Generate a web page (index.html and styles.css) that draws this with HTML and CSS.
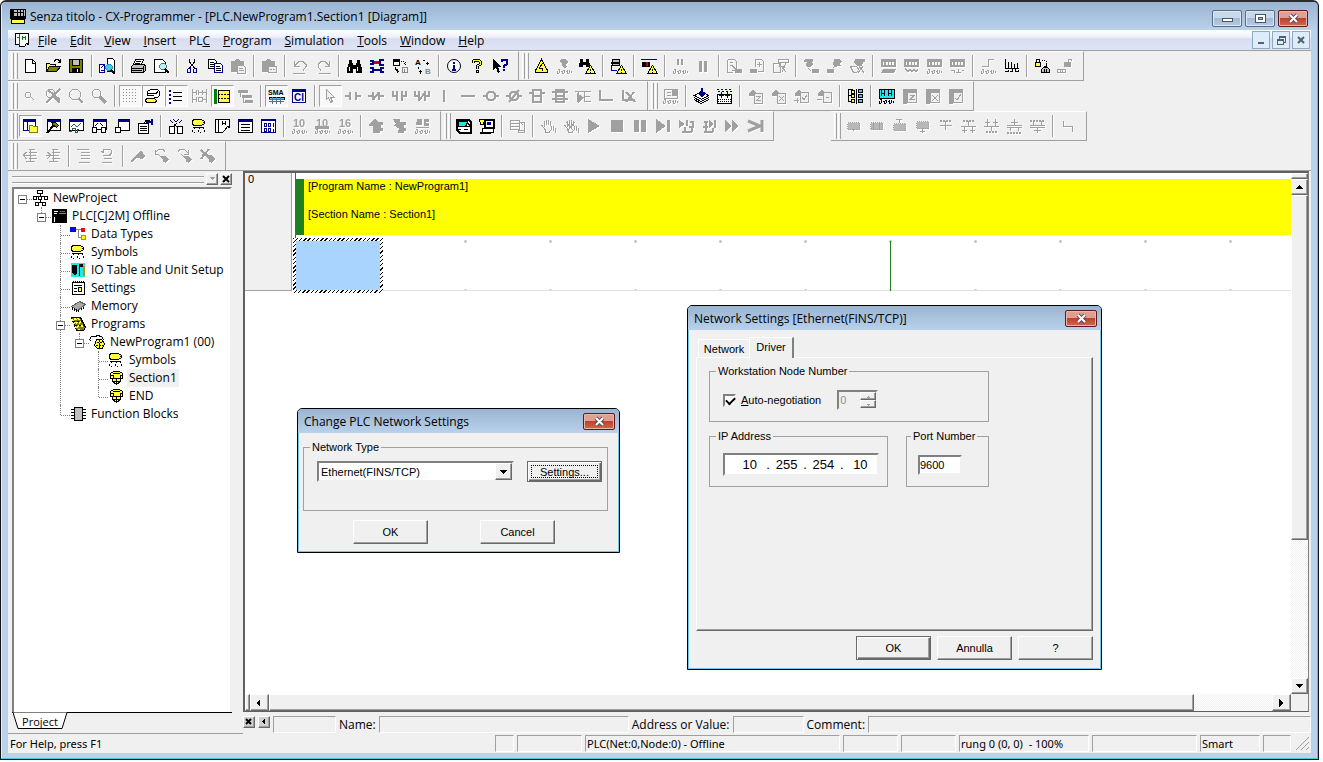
FILE: index.html
```html
<!DOCTYPE html>
<html lang="en">

<head>
  <meta charset="UTF-8">
  <meta name="viewport" content="width=device-width, initial-scale=1.0">
  <title>Senza titolo - CX-Programmer</title>
  <link rel="stylesheet" href="styles.css">
</head>

<body>
  <!-- shapes shared by several icons -->
  <svg class="defs">
    <defs>
      <path id="glasses" d="M1 15.5h2M1.5 15v-2M3.5 12v3M2 11.5h2M5 13.5h1v2h2M6.5 12.5h1M8.5 12v3M10 13.5h1v2h2M11 12.5h1M13.5 12v3M15.5 13v2" />
      <path id="magnifier" d="M3.5 1.5h4l2 2v4l-2 2h-4l-2-2v-4z" />
      <g id="warn"><path class="y" d="M11.5 7.5l5 8h-10z" /><path d="M11.5 11v2M11.5 14v1" /></g>
      <path id="plcbox" class="k" fill-rule="evenodd" d="M1 1h15v8H1zM3 4v3h1V4zM6 4v3h2V4zM9 4v3h2V4zM12 4v3h2V4z" />
      <g id="tag"><path class="y" d="M2.5 1.5h8l3 2v2l-3 2h-8l-1-2v-2z" /><path d="M12 4.5h1M2 9.5h11M1.5 14v-2M3 14.5h1M7.5 14v-2M9 14.5h1M13.5 14v-2M3.5 10v1M8.5 10v1M12.5 10v1" /></g>
      <g id="section"><path class="y" d="M2.5 3.5l3-2h6l3 2v5h-2v3l-4 3-4-3v-3h-2z" /><path d="M2 5.5h3v3h7v-3h2M5 3.5h7M8.5 8v6M5 11.5h7" /></g>
      <path id="book" d="M2 1h14v3H6v12H2z" />
      <path id="keys" d="M2 6l4-5 4 5v2H2z" />
    </defs>
  </svg>

  <div class="window">
    <header class="titlebar">
      <svg class="ic"><path class="g" d="M1.5 1.5h14v7h-14z" /><path class="k" d="M0 1h4v7H0zM0 8h16v3H0z" /><path d="M2 4.500h12M7.500 2v6M10.500 2v6M13.500 2v6" /><path class="y" d="M1.500 11.500h13v4h-13z" /></svg>
      <h1>Senza titolo - CX-Programmer - [PLC.NewProgram1.Section1 [Diagram]]</h1>
      <button class="cap" aria-label="Minimize"><svg><path class="w" d="M5.5 7.5h10v3h-10z" /></svg></button>
      <button class="cap" aria-label="Maximize"><svg><path class="w" fill-rule="evenodd" d="M5.5 3.5h10v8h-10zM8.5 6.5h4v2h-4z" /></svg></button>
      <button class="cap close" aria-label="Close"><svg class="smooth"><path class="xo" d="M7 4l7 7M14 4l-7 7" /><path class="xi" d="M7 4l7 7M14 4l-7 7" /></svg></button>
    </header>

    <nav class="menubar">
      <svg class="ic"><path class="w" d="M1.5 1.5h13v11l-2-1-2 3h-5v-2h-4z" /><path d="M5.5 2v11M3 5.5h2M8.5 4v4M11.5 4v4M9 5.5h2" stroke="#008000" /></svg>
      <button><u>F</u>ile</button>
      <button><u>E</u>dit</button>
      <button><u>V</u>iew</button>
      <button><u>I</u>nsert</button>
      <button>PL<u>C</u></button>
      <button><u>P</u>rogram</button>
      <button><u>S</u>imulation</button>
      <button><u>T</u>ools</button>
      <button><u>W</u>indow</button>
      <button><u>H</u>elp</button>
      <span class="mdi">
        <button aria-label="Minimize diagram"><svg><path d="M5 11h6" stroke-width="2" /></svg></button>
        <button aria-label="Restore diagram"><svg><path d="M4.5 7.5h6v5h-6zM4 8.5h7M6.5 7v-3h6v6h-2M7 5.5h5" /></svg></button>
        <button aria-label="Close diagram"><svg class="smooth"><path d="M5 5l6 6M11 5l-6 6" stroke-width="2" /></svg></button>
      </span>
    </nav>

    <div class="toolrow">
      <div class="band">
        <button aria-label="New"><svg><path class="w" d="M3.5 1.5h7l3 3v10h-10z" /><path d="M10.5 2v3h3" /></svg></button>
        <button aria-label="Open"><svg><path class="y" d="M1.5 13.5v-8h3l1 1h5v3" /><path class="o" d="M1.5 13.5l3-5h11l-4 5z" /><path d="M9 3.5l2-2h2l2 2M15.5 1v4M13 4.5h2" /></svg></button>
        <button aria-label="Save"><svg><path class="o" d="M1.5 1.5h13v13h-13z" /><path class="g" d="M4.5 1.5h7v6h-7z" /><path class="k" d="M4 10h8v5H4z" /><path d="M9.5 11v3" stroke="#fff" /></svg></button>
        <i></i>
        <button aria-label="Compare"><svg><path class="w b" d="M.5 6.5h5v8h-5z" /><path class="w" d="M8.5 .5h5l2 2v11h-7z" /><path class="b" d="M2 9.5l3-2M2 12.5h3" /><path class="c" d="M8.500 6.500h3l2 2v2l-2 2h-3l-2-2v-2z" stroke="#2090c0" /><path d="M12 12l4 4" stroke-width="2" /></svg></button>
        <i></i>
        <button aria-label="Print"><svg><path class="w" d="M5.5 1.5h8l-2 5h-8z" /><path class="g" d="M1.5 8.5l2-2h11l1 2v4l-2 2h-12z" /><path d="M6 3.5h5M5 5.5h5M2 10.5h12M2 12.5h10M13.5 8v6" /></svg></button>
        <button aria-label="Print preview"><svg><path class="w" d="M1.5 1.5h8l3 3v10h-11z" /><path fill="#c0f0f0" stroke="#408080" d="M8.5 5.5h3l2 2v2l-2 2h-3l-2-2v-2z" /><path d="M12 11l4 4" stroke-width="2" /></svg></button>
        <i></i>
        <button aria-label="Cut"><svg><path d="M5.5 1v3l5 6M10.5 1v3l-5 6" /><path class="b" d="M4.5 10.5h2v4h-3v-3zM10.5 10.5h2v4h-3v-3z" /></svg></button>
        <button aria-label="Copy"><svg><path class="w" d="M1.5 1.5h6l2 2v7h-8z" /><path class="w b" d="M7.5 5.5h6l2 2v7h-8z" /><path d="M3 4.5h4M3 6.5h4M3 8.5h4M9 8.5h4M9 10.5h5M9 12.5h5" /></svg></button>
        <button aria-label="Paste" disabled><svg><path class="k" d="M1 3h4l1-2h3l1 2h4v4H7v7H1z" /><path class="w" d="M7.5 7.5h6l2 2v6h-8z" /><path d="M9 10.5h4M9 12.5h5" /></svg></button>
        <i></i>
        <button aria-label="Paste special" disabled><svg><path class="k" d="M1 3h4l1-2h3l1 2h4v5H7v6H1z" /><path class="w" d="M7.5 8.5h8v6h-8z" /><path d="M9 11.5h2M12 11.5h2" /></svg></button>
        <i></i>
        <button aria-label="Undo" disabled><svg><path d="M2.5 3v5h5M3 7.5l4-4h4l3 3v2l-3 4M1 15.5h12" /></svg></button>
        <button aria-label="Redo" disabled><svg><path d="M14.5 3v5h-5M14 7.5l-4-4h-4l-3 3v2l3 4M4 15.5h12" /></svg></button>
        <i></i>
        <button aria-label="Find"><svg><path class="k" d="M3 2h3v3h1v2h3V5h1V2h3v3l2 5v5h-6v-4H7v4H1v-5l2-5z" /><path d="M3.5 9v4M11.5 9v4" stroke="#fff" /></svg></button>
        <button aria-label="Replace"><svg class="smooth"><path d="M5 4.500h6" stroke="#c00030" stroke-width="3" /><path class="b" d="M1 3h3v3H1M15 2h-4v5h4" stroke-width="2" /><path class="b" d="M1 10h3v4H1M15 10h-3v4h3M4 12h8" stroke-width="2" /></svg></button>
        <button aria-label="Replace next"><svg><path class="k" d="M1 1h7v3H1z" /><path d="M1.5 4v3h6v-3M3.5 9v2l3 3M5.5 11v4" /><path d="M9 3.5h3v3M13.5 4v3" stroke-dasharray="1 1" /><path d="M10.5 9.5h5v5h-5zM12 11v3" stroke="#888" /></svg></button>
        <button aria-label="Change all"><svg><text x="0" y="7">A</text><text x="10" y="16" class="gt">B</text><path d="M8 2.5h2M12.5 4v3M11 5.5h3M3.5 9v2M5.5 12v4M4 13.5h3" /></svg></button>
        <i></i>
        <button aria-label="Information"><svg class="smooth"><circle class="w" cx="8" cy="8" r="6.5" /><path class="b" d="M8 4v2M8 7v5M6 12h4" stroke-width="2" /></svg></button>
        <button aria-label="Help"><svg><path d="M4.5 5v-2l2-1h3l2 2v2l-3 2v3" stroke-width="3" /><path d="M4.5 5v-2l2-1h3l2 2v2l-3 2v3" stroke="#ff0" /><path class="y" d="M7.5 12.5h2v2h-2z" /></svg></button>
        <button aria-label="Context help"><svg><path class="k" d="M1 1l8 8H6l2 5-2 1-2-5-3 2z" /><path class="b" d="M10 4v-2h5v4l-3 2v2M12 11v2" stroke-width="2" /></svg></button>
      </div>
      <div class="band">
        <button aria-label="Work online"><svg><path class="y" d="M8.5 1.5l6 11v2h-12v-2z" /><path d="M9.5 5l-3 5h3v3" /></svg></button>
        <button aria-label="Monitor" disabled><svg><path class="k" d="M5 1h5l2 3-2 2 1 3-3 1-3-3 2-1-3-2z" /><use href="#glasses" /></svg></button>
        <button aria-label="Find online"><svg><path class="k" d="M1 1h3v3h3V1h3l1 8H7V7H4v2H0z" /><use href="#warn" /></svg></button>
        <i></i>
        <button aria-label="Auto online"><svg><path class="g" d="M2.5 1.5h7v6h-7z" /><path d="M1 4.5h9" stroke-width="2" /><path class="b" d="M1.5 7v5h5" /><use href="#warn" /></svg></button>
        <i></i>
        <button aria-label="Simulator online"><svg><path class="b" d="M0 1.5h16" /><path class="k" d="M1 4h8v5H1z" /><path d="M6 4v4" stroke="#c00030" stroke-width="2" /><use href="#warn" /></svg></button>
        <i></i>
        <button aria-label="Pause monitor" disabled><svg><path d="M6 1v6M10 1v6" stroke-width="2" /><use href="#glasses" /></svg></button>
        <button aria-label="Pause" disabled><svg><path class="k" d="M4 3h3v11H4zM9 3h3v11H9z" /></svg></button>
        <i></i>
        <button aria-label="Transfer to PLC" disabled><svg><path d="M1.5 1.5h7l2 2v6M1.5 2v12h5M4 4.5h3M4 7.5h2l4 4M10 8v4H6" /><path class="k" d="M9 11h7v4H9z" /></svg></button>
        <button aria-label="Transfer from PLC" disabled><svg><path d="M6.5 9v-7.5h6l2 2v10h-6M10.5 9v-5M8 6.5h5" /><path class="k" d="M1 11h7v4H1z" /></svg></button>
        <button aria-label="Compare with PLC" disabled><svg><path d="M1.5 5.5h7v9h-7zM6 1.5h10v3h-10zM7.5 4v4h4M9 8l5 6M14 5l-4 9" /></svg></button>
        <i></i>
        <button aria-label="Transfer all to PLC" disabled><svg><path class="k" d="M2 1h8v3H8l2 2-2 3H4l-1-3 1-2H1zM9 11h7v4H9z" /><path d="M5 10l3 3" /></svg></button>
        <button aria-label="Transfer all from PLC" disabled><svg><path class="k" d="M8 1h5l3 3-2 1 1 3h-4l-1 2-3-3zM1 11h7v4H1z" /><path d="M7 10l3-3" /></svg></button>
        <button aria-label="Compare all" disabled><svg><path class="k" d="M6 1h10v3h-2l-1 4H8L5 5z" /><path d="M1.5 8.5h6l3 4-3 2h-3zM10 8l5 7M14 8l-5 7" /></svg></button>
        <i></i>
        <button aria-label="Program mode" disabled><svg><use href="#plcbox" /><path class="k" d="M3 11h13l-2 4H1z" /></svg></button>
        <button aria-label="Debug mode" disabled><svg><use href="#plcbox" /><path d="M2 10l3 4 2-3 2 3 2-3 2 3 2-3" /></svg></button>
        <button aria-label="Monitor mode" disabled><svg><use href="#plcbox" /><use href="#glasses" /></svg></button>
        <button aria-label="Run mode" disabled><svg><use href="#plcbox" /><path d="M2 12.5h3v2M7 14.5h5M9.5 11v4M13 12.5h2" /></svg></button>
        <i></i>
        <button aria-label="Differential monitor" disabled><svg><path d="M2 8.5h6v-7h6" /><use href="#glasses" /></svg></button>
        <button aria-label="Data trace"><svg><path d="M2.5 1v9h13M5.5 4v6M8.5 4v6M11.5 6v4M14.5 5v5M2 13.5h3v-2M7 13.5h2v-3h3v3h3v-2" /></svg></button>
        <i></i>
        <button aria-label="Set password"><svg><path class="y" d="M1.5 4.5h5v4h-5z" /><path d="M2.5 4v-3h3v3M12.500 5v4M10 8.500h3" /><path d="M8 2.500h4M12.500 3v2" stroke-dasharray="1 1" /><path class="g" d="M7.5 11.5l2-2h4l2 2v3h-8z" /><path d="M10.5 11v3M12.5 11v3" /></svg></button>
        <button aria-label="Release password" disabled><svg><path class="k" d="M7 4h7v5H7z" /><path d="M11.5 4v-3h3v2M.5 11.5h8v3h-8zM3.5 11v3M5.5 11v3" /></svg></button>
      </div>
    </div>

    <div class="toolrow">
      <div class="band">
        <button aria-label="Zoom fit" disabled><svg><path d="M4.5 4.5h3l1 1v3l-1 1h-3l-1-1v-3zM9 9l3 3" /></svg></button>
        <button aria-label="Zoom region" disabled><svg><use href="#magnifier" /><path d="M1 15L15 1M9 9l6 6M3 2l12 10" stroke-width="2" /></svg></button>
        <button aria-label="Zoom in" disabled><svg><path d="M4.5 1.5h5l3 3v4l-3 3h-5l-3-3v-4z" /><path d="M11 11l4 4" stroke-width="2" /></svg></button>
        <button aria-label="Zoom out" disabled><svg><use href="#magnifier" /><path d="M9 9l6 6" stroke-width="3" /></svg></button>
        <i></i>
        <button class="on" aria-label="Grid"><svg><path d="M1 1.5h15M1 4.5h15M1 7.5h15M1 10.5h15M1 13.5h15" stroke="#909090" stroke-dasharray="1 2" /></svg></button>
        <button class="on" aria-label="Comments"><svg><path class="w" d="M2.5 3.5l3-2h7l2 2v4l-2 2h-3v2M3 5.5h8l2-2M2 4v3h7" /><path class="y" d="M1.5 10.5h8l2 2-1 2h-9l-1-2z" /></svg></button>
        <button class="on" aria-label="Rung annotation"><svg><path class="b" d="M1 2.5h2M1 6.5h2M1 10.5h2M1 14.5h2" stroke-width="2" /><path d="M5 4.5h9M5 8.5h9M5 12.5h9" /></svg></button>
        <button aria-label="Monitor in rung" disabled><svg><path d="M1.5 1v14M15.5 1v14M2 4.5h3M5.5 2v5M7.5 2v5M8 4.5h3M11.5 2v5M2 11.5h3M5.5 9v5M7.5 9.5h4v4h-4zM12 11.5h3M12 4.5h3" /></svg></button>
        <button class="on" aria-label="Rung wrapping"><svg><path d="M1.5 1v15" stroke="#008000" stroke-width="3" /><path class="y" d="M4.5 2.5h11v12h-11z" /><path d="M4 6.5h12M4 10.5h12" stroke-dasharray="2 1" /></svg></button>
        <button aria-label="Cascade" disabled><svg><path class="k" d="M1 2h10v3H1zM5 7h10v3H5zM8 12h8v3H8z" /><path d="M3.5 5v4M6.5 9v5h2" /></svg></button>
        <i></i>
        <button class="on" aria-label="Show as mnemonics"><svg><text x="0" y="7" class="tiny">SMA</text><path class="c" d="M1 9h15v2H1z" /><path d="M1 11.5h15M1 13.5h15M4.5 9v7M8.5 9v7M12.5 9v7" stroke="#507090" /></svg></button>
        <button aria-label="Show instructions"><svg><path class="w b" d="M1.5 1.5h13v13h-13z" /><path class="b" d="M1 2.500h14" stroke-width="3" /><text x="3" y="13" class="nt">CI</text></svg></button>
        <i></i>
        <button class="on" aria-label="Selection mode" disabled><svg><path class="w" d="M4.5 1.5l8 8h-4l2 4-2 1-2-5-2 2z" /></svg></button>
        <button aria-label="Contact" disabled><svg><path d="M0 8h6M5 4v8M11 4v8M11 8h5" stroke-width="2" /></svg></button>
        <button aria-label="Closed contact" disabled><svg><path d="M0 8h5M5 4v8M11 4v8M11 8h5M5 12l6-8" stroke-width="2" /></svg></button>
        <button aria-label="Contact OR" disabled><svg><path d="M2 3v5h4M6 3v10M11 3v10M11 8h4V3" stroke-width="2" /></svg></button>
        <button aria-label="Closed contact OR" disabled><svg><path d="M1 3v5h4M5 3v10M11 3v10M11 8h4V3M5 12l6-7" stroke-width="2" /></svg></button>
        <button aria-label="Vertical" disabled><svg><path d="M7 2v12" stroke-width="2" /></svg></button>
        <button aria-label="Horizontal" disabled><svg><path d="M1 8h14" stroke-width="2" /></svg></button>
        <button aria-label="Coil" disabled><svg class="smooth"><path d="M0 8h4M12 8h4M6 4h4l2 2v4l-2 2H6l-2-2V6z" stroke-width="2" /></svg></button>
        <button aria-label="Closed coil" disabled><svg class="smooth"><path d="M0 8h4M12 8h4M6 4h4l2 2v4l-2 2H6l-2-2V6zM3 14L13 2" stroke-width="2" /></svg></button>
        <button aria-label="Instruction" disabled><svg><path d="M4 2h8v12H4zM4 8h8M0 5h4M12 5h4" stroke-width="2" /></svg></button>
        <button aria-label="Function block" disabled><svg><path d="M4 2h8v12H4zM4 8h8M0 4h16M0 11h16" stroke-width="2" /></svg></button>
        <button aria-label="Parameter" disabled><svg><path d="M0 3.5h16M9.5 4v10M10 8.5h5M10 13.5h6M3.5 4v10l5-5" /><path class="k" d="M2 5l6 4-6 5z" /></svg></button>
        <button aria-label="Line connect" disabled><svg><path d="M2 2v10h13" stroke-width="2" /></svg></button>
        <button aria-label="Line delete" disabled><svg><path d="M2 2v10h12M5 4l9 10M13 4l-8 10" stroke-width="2" /></svg></button>
      </div>
      <div class="band">
        <button aria-label="Window monitor" disabled><svg><path d="M2.5 1.5h13v9h-13zM5 4.5h4M5 7.5h4" /><path class="k" d="M10 2h5v6h-5z" /><use href="#glasses" /></svg></button>
        <i></i>
        <button aria-label="Compile program"><svg><path class="w" d="M1.5 7.5l7-4 7 4-7 4z" /><path d="M1 9.5l7 4 8-4M1 11.5l7 4 8-4" /><path class="b" d="M8.5 0v6M6 5l3 3 3-3" stroke-width="2" /></svg></button>
        <button aria-label="Compile all"><svg><path d="M1 1.5h15M2 3.5h14" class="b" stroke-dasharray="2 2" /><path class="w" d="M1.5 6.5h14v9h-14z" /><path class="b" d="M5.5 4v6M3 7.5h5M11.5 4v6M9 7.5h5" /><path d="M2 11.5h13M2 13.5h13" stroke-dasharray="1 1" /></svg></button>
        <i></i>
        <button aria-label="Edit online" disabled><svg><use href="#keys" class="k" /><path class="w" d="M7.5 5.5h8v10h-8z" /><path d="M9 8.5h4l-3 4h4" /></svg></button>
        <button aria-label="Cancel online edit" disabled><svg><use href="#keys" class="k" /><path class="w" d="M7.5 5.5h8v10h-8z" /><path d="M9 8l5 5M14 8l-5 5" /></svg></button>
        <button aria-label="Send changes" disabled><svg><use href="#keys" class="k" /><path class="w" d="M7.5 4.5h8v10h-8z" /><path d="M9 9l2 3 3-5M1 12.5h5M4 10v5" /></svg></button>
        <button aria-label="Release access" disabled><svg><use href="#keys" class="k" /><path class="w" d="M7.5 4.5h8v10h-8z" /><path d="M10 9.5h3M1 11.5h5" /></svg></button>
        <i></i>
        <button aria-label="Address reference"><svg><path d="M1 1.5h5M1.5 2v12M2 7.5h2M2 13.5h2" /><path class="y" d="M4.5 2.5h3v3h-3zM4.5 6.5h3v3h-3zM4.5 11.5h3v3h-3z" /><path class="c" d="M11.5 1.5h4v3h-4zM11.5 6.5h4v3h-4zM11.5 11.5h4v3h-4z" /><path d="M9.5 1v15" /></svg></button>
        <i></i>
        <button aria-label="Watch"><svg><path class="c2" d="M1 1h15v9H1z" /><path d="M3.5 2v6M6.5 2v6M4 5.5h2M10.5 2v6M13.5 2v6M11 5.5h2" /><use href="#glasses" /></svg></button>
        <button aria-label="Output edit" disabled><svg><use href="#book" class="k" /><path class="w" d="M6.5 4.5h9v10h-9z" /><path d="M9 7.5h4l-4 4h5" /></svg></button>
        <button aria-label="Output cancel" disabled><svg><use href="#book" class="k" /><path class="w" d="M6.5 4.5h9v10h-9z" /><path d="M8 7l6 6M14 7l-6 6" /></svg></button>
        <button aria-label="Output accept" disabled><svg><use href="#book" class="k" /><path class="w" d="M6.5 4.5h9v10h-9z" /><path d="M8 10l2 2 4-6" /></svg></button>
      </div>
    </div>

    <div class="toolrow">
      <div class="band">
        <button class="on" aria-label="Project workspace"><svg><path class="w b" d="M1.5 1.5h12v11h-12z" /><path class="b" d="M1 2.500h13M5.5 3v9" /><path class="b" d="M1 2.500h13" stroke-width="3" /><path class="y" d="M7.5 7.5h3l1 1h4v6h-8z" stroke="#808000" /></svg></button>
        <button aria-label="Output window"><svg><path class="w" d="M2.5 1.5h13v11h-13z" /><path class="b" d="M2 2.5h14" stroke-width="2" /><path class="o" d="M6.5 4.5h4l3 3-2 2-3-2z" /><path d="M9 7l-7 8" stroke-width="2" /></svg></button>
        <button aria-label="Watch window"><svg><path class="w" d="M1.5 1.5h14v11h-14z" /><path class="b" d="M1 2.5h15" stroke-width="2" /><path d="M3 9l3-3 3 3 4-4M1 13.5h2l2-3h2v4h2v-3h2" stroke="#206060" /></svg></button>
        <button aria-label="Address tool"><svg><path class="w" d="M2.5 1.5h13v10h-13z" /><path class="b" d="M2 2.5h14" stroke-width="2" /><path class="w" d="M1.5 9.5h4v5h-4zM10.5 9.5h4v5h-4z" /><path d="M4 8l3-3M12 8l-3-3" /></svg></button>
        <button aria-label="Output tool"><svg><path class="w" d="M4.5 1.5h11v11h-11z" /><path class="b" d="M4 2.5h12" stroke-width="2" /><path class="w" d="M1.5 9.5h5v5h-5z" /></svg></button>
        <button aria-label="Properties"><svg><path class="w" d="M1.5 5.5h10v10h-10z" /><path d="M3 8.5h7M3 10.5h7M3 12.5h7M7 6l2-4h4" /><path class="b" d="M9 3.5h5M15 1v6" stroke-width="2" /></svg></button>
        <i></i>
        <button aria-label="Cross reference"><svg><path class="w" d="M1.5 8.5h5v7h-5zM9.5 8.5h5v7h-5z" /><path d="M2 2l3 3M6 6l4 4M14 2l-3 3M9 5l-4 4" /><path class="b" d="M5 1l3 3M11 1l-3 3" /></svg></button>
        <button aria-label="Local symbols"><svg><use href="#tag" /></svg></button>
        <button aria-label="View diagram"><svg><path class="w" d="M1.5 1.5h14v8l-2-1-3 4-2 2h-7z" /><path d="M4.5 1v14M8.5 3v4M11.5 3v4M9 5.5h2" /></svg></button>
        <button aria-label="View mnemonics"><svg><path class="w" d="M1.5 1.5h14v13h-14z" /><path class="b" d="M1 2.5h15" stroke-width="2" /><path d="M4 6.5h9M4 9.5h9M4 12.5h9" /></svg></button>
        <button aria-label="View addresses"><svg><path class="w b" d="M1.5 1.5h14v13h-14z" /><path class="b" d="M1 2.5h15M4.5 5.5h2v3h-2zM8.5 5.5h2v3h-2zM13 5v4M4.5 10.5h2v3h-2zM8.5 10.5h2v3h-2zM12.5 11h1v3" /></svg></button>
        <i></i>
        <button aria-label="Decimal" disabled><svg><text x="2" y="9" class="num">10</text><use href="#glasses" /></svg></button>
        <button aria-label="Signed decimal" disabled><svg><text x="2" y="9" class="num">10</text><path d="M1 9.5h14" stroke-width="3" /><use href="#glasses" /></svg></button>
        <button aria-label="Hex" disabled><svg><text x="2" y="9" class="num">16</text><use href="#glasses" /></svg></button>
        <i></i>
        <button aria-label="Force on" disabled><svg><path class="k" d="M1 6l6-5 3 3h5v3h-2v3h2v3h-3v2H5V8H1z" /></svg></button>
        <button aria-label="Force off" disabled><svg><path class="k" d="M2 1h7v3h6v3h-2v3h2v3h-2v2H7v-3l2-1-7-4 3-1z" /></svg></button>
        <button aria-label="Force cancel" disabled><svg><path class="k" d="M3 1h5v6H2zM10 1h5v3h-3v1h3v3h-5z" /><path d="M2 9.5h13" /><use href="#glasses" /></svg></button>
      </div>
      <div class="band">
        <button aria-label="Work online simulator"><svg><path class="w" d="M1.500 1.500h12l2 2v11h-11l-3-3z" stroke-width="2" /><path class="c2" d="M3.5 3.500h9v5h-9z" /><path d="M3 11.500h3M9 11.500h4" /><path class="y" d="M12.5 4.5l3 4h-5z" /></svg></button>
        <button aria-label="Simulator settings"><svg><path class="w" d="M6.5 1.5h9v8h-9z" stroke-width="2" /><path class="y" d="M1.5 1.5h5l-1 5h-3z" /><path class="w" d="M4.500 10.500h11v4h-11z" /><path d="M2 15h11" stroke-width="2" /><path class="b" d="M9 5.500h4" stroke-width="3" /></svg></button>
        <i></i>
        <button aria-label="Task control" disabled><svg><path d="M1.5 2.5h9v3h-9zM1.5 5.5h9v3h-9zM1.5 8.5h9v3h-9zM11 4.5h4v7M9 12.5h6v2h-6zM12 5l2 2" /></svg></button>
        <i></i>
        <button aria-label="Break point" disabled><svg><path d="M4.5 9v-6M6.5 7v-5M8.5 7v-5M10.5 8v-5M1.5 7l4 5v2h4l2-3v-3M13.5 8v5M15.5 10v5" /></svg></button>
        <button aria-label="Clear break points" disabled><svg><path d="M4.5 9v-6M6.5 7v-5M8.5 7v-5M10.5 8v-5M1.5 7l4 5v2h4l2-3v-3M13.5 8v5M15.5 10v5M3 4l8 9M12 4l-8 9" /></svg></button>
        <button aria-label="Run" disabled><svg><path class="k" d="M2 1l12 7-12 7z" /></svg></button>
        <button aria-label="Stop" disabled><svg><path class="k" d="M2 2h12v12H2z" /></svg></button>
        <button aria-label="Pause simulator" disabled><svg><path class="k" d="M2 2h5v12H2zM9 2h5v12H9z" /></svg></button>
        <button aria-label="Step run" disabled><svg><path class="k" d="M1 1l10 7-10 7zM12 2h3v12h-3z" /></svg></button>
        <button aria-label="Step in" disabled><svg><path class="k" d="M1 2l6 4-6 4zM8 2h2v6H8z" /><path d="M12 3.5h3M11 8.5h4v-6M4 13.5h10M6.5 9v5M13.5 9v5" stroke-width="2" /></svg></button>
        <button aria-label="Step out" disabled><svg><path class="k" d="M8 2l5 4-5 4zM13 2h2v8h-2z" /><path d="M3 3.5h4M2 8.5h5M3 13.5h9M4.5 4v10M11.5 10v4" stroke-width="2" /></svg></button>
        <button aria-label="Continuous step" disabled><svg><path class="k" d="M1 2l7 6-7 6zM8 2l7 6-7 6z" /></svg></button>
        <button aria-label="Scan run" disabled><svg class="smooth"><path d="M1 3l12 5-12 5M15 2v12" stroke-width="3" /></svg></button>
      </div>
      <div class="band gap">
        <button aria-label="Step" disabled><svg><path class="h" d="M2.5 4.5h12v7h-12z" /><path d="M8.5 11v2" /></svg></button>
        <button aria-label="Initial step" disabled><svg><path class="h" d="M2.5 4.5h12v7h-12z" /><path d="M5.5 5v6M11.5 5v6" /></svg></button>
        <button aria-label="Step up" disabled><svg><path class="h" d="M2.5 5.5h12v7h-12z" /><path d="M5 1.5h6M8.5 1v4" /></svg></button>
        <button aria-label="Step down" disabled><svg><path class="h" d="M2.5 3.5h12v7h-12z" /><path d="M8.5 10v5M6 13.5h5" /></svg></button>
        <button aria-label="Transition" disabled><svg><path d="M3 2.5h12" stroke-width="2" stroke-dasharray="2 1" /><path d="M8.5 3v9M3 7.5h12" /></svg></button>
        <button aria-label="Divergence" disabled><svg><path d="M3 2.5h12" stroke-width="2" stroke-dasharray="2 1" /><path d="M8.5 3v5M1 8.5h15M4.5 9v6M12.5 9v6M2 12.5h5M10 12.5h5" /></svg></button>
        <button aria-label="Convergence" disabled><svg><path d="M4.5 1v7M12.5 1v7M2 4.5h5M10 4.5h5M1 8.5h15M8.5 9v4" /><path d="M3 13.5h12" stroke-width="2" stroke-dasharray="2 1" /></svg></button>
        <button aria-label="Parallel divergence" disabled><svg><path d="M8.5 1v6M5 4.5h7M1 7.5h15M1 9.5h15M4.5 10v3M12.5 10v3" /><path d="M1 14.5h15" stroke-width="2" stroke-dasharray="2 1" /></svg></button>
        <button aria-label="Parallel convergence" disabled><svg><path d="M1 2.5h15" stroke-width="2" stroke-dasharray="2 1" /><path d="M4.5 3v4M12.5 3v4M1 7.5h15M1 9.5h15M8.5 10v5M5 12.5h7" /></svg></button>
        <i></i>
        <button aria-label="Jump" disabled><svg><path d="M3.5 3v5h9v6" /></svg></button>
      </div>
    </div>

    <div class="toolrow last">
      <div class="band">
        <button aria-label="Outdent" disabled><svg><path d="M7 1.5h6M7 4.5h8M1 7.5h13M7 10.5h8M4 13.5h9M4.5 4l-3 3 3 4M8.5 1v13" /></svg></button>
        <button aria-label="Indent" disabled><svg><path d="M7 1.5h6M7 4.5h8M1 7.5h13M7 10.5h8M4 13.5h9M2.5 4l3 3-3 4M8.5 1v13" /></svg></button>
        <i></i>
        <button aria-label="Comment block" disabled><svg><path d="M1 1.5h12M5 4.5h9M5 7.5h9M5 10.5h9M3 14.5h11" /></svg></button>
        <button aria-label="Uncomment block" disabled><svg><path d="M4 7.5h8M5 10.5h8M3 14.5h10M4.5 5v-4h7l1 2v2l-2 2M2 3l3 2" /></svg></button>
        <i></i>
        <button aria-label="Bookmark" disabled><svg><path class="k" d="M8 6l3-4 4 6-3 3-5-1z" /><path d="M1 14L9 6" stroke-width="2" /></svg></button>
        <button aria-label="Previous bookmark" disabled><svg><path d="M2 2v4h4M2 5l4-4h4l2 3M5 6l9 8" /><path class="k" d="M9 8h3l4 3-3 4-3-1z" /></svg></button>
        <button aria-label="Next bookmark" disabled><svg><path d="M12 2v4h-4M12 5l-4-4h-4l-2 3M5 6l9 8" /><path class="k" d="M9 8h3l4 3-3 4-3-1z" /></svg></button>
        <button aria-label="Clear bookmarks" disabled><svg><path d="M2 2l12 12M10 1l-8 10M3 7h6" stroke-width="2" /><path class="k" d="M9 7h3l4 4-3 4-3-1z" /></svg></button>
      </div>
    </div>

    <main class="workspace">
      <aside class="side">
        <div class="grip">
          <span></span>
          <button class="raised" aria-label="Panel menu" disabled><svg><path class="k" d="M2 3h6L5 6z" /></svg></button>
          <button class="raised" aria-label="Close panel"><svg class="smooth"><path d="M2 2l6 6M8 2l-6 6" stroke-width="2" /></svg></button>
        </div>
        <ul class="tree">
          <li>
            <div class="node"><button class="toggle" aria-label="Collapse"></button><svg class="ic"><path d="M8.5 3v9M3 6.5h10M5 12.5h6M3.500 6v2M13.500 6v2" /><path class="w" d="M5.5 .5h5v3h-5zM1.5 6.5h3v3h-3zM6.5 6.5h3v3h-3zM12.5 6.5h3v3h-3zM3.5 12.5h3v3h-3zM10.5 12.5h3v3h-3z" /></svg><span>NewProject</span></div>
            <ul>
              <li class="end">
                <div class="node"><button class="toggle" aria-label="Collapse"></button><svg class="ic"><path class="k" d="M1 1h15v14H1z" /><path d="M3 3.5h4M3 5.5h3M3.5 9v5" stroke="#fff" /><path d="M9 3.5h5" stroke="#e03030" /><path d="M8 5.5h7" stroke="#888" /></svg><span>PLC[CJ2M] Offline</span></div>
                <ul>
                  <li><div class="node"><svg class="ic"><path d="M5 3.5h9M8.5 4v7M8 11.5h4" stroke="#888" /><path fill="#00f" stroke="none" d="M0 1h6v5H0z" /><path fill="#f00" stroke="none" d="M11 2h4v4h-4z" /><path fill="#ff0" stroke="#a0a000" d="M11.5 9.5h4v4h-4z" /></svg><span>Data Types</span></div></li>
                  <li><div class="node"><svg class="ic"><use href="#tag" /></svg><span>Symbols</span></div></li>
                  <li><div class="node"><svg class="ic"><path class="c2" d="M1 1h14v14H1z" stroke="none" /><path class="k" d="M2 3h5v8l-2 3-3-3zM9 2h4v3h-3v9H9z" /><path d="M13.5 4v10" stroke="#a0a000" stroke-width="2" /></svg><span>IO Table and Unit Setup</span></div></li>
                  <li><div class="node"><svg class="ic"><path class="w" d="M2.5 2.5h12v12h-12z" /><path d="M3 1.5h11" stroke-dasharray="1 1" /><path d="M4 5.5h8M4 8.5h3M4 11.5h3" /><path class="y" d="M8.5 7.5h3v4h-3z" /></svg><span>Settings</span></div></li>
                  <li><div class="node"><svg class="ic"><path fill="#a8a8a8" d="M1.5 8.5l8-5 6 3-8 6z" stroke="#606060" /><path d="M2 9v3M4 10v3M6 11v3M8 12v2M11 10v2M13 9v2" /></svg><span>Memory</span></div></li>
                  <li>
                    <div class="node"><button class="toggle" aria-label="Collapse"></button><svg class="ic"><path class="o" d="M1.5 1.5h9l5 10-2 3h-7z" /><path d="M2 3l4 9M5 2l4 12M8 2l5 11" stroke="#ff4" stroke-dasharray="2 2" stroke-width="2" /><path d="M3 5h9M5 9h9" stroke-dasharray="2 2" /></svg><span>Programs</span></div>
                    <ul>
                      <li class="end">
                        <div class="node"><button class="toggle" aria-label="Collapse"></button><svg class="ic"><path class="w" d="M2.5 7.5l-2-2 2-3h4l2-1 4 1 2 3-2 3" /><path class="y" d="M7.5 5.5h5l3 4-2 5h-5l-3-3z" /><path d="M8 8.5h5M7 11.5h7M10.5 6v9" stroke-dasharray="2 1" /></svg><span>NewProgram1 (00)</span></div>
                        <ul>
                          <li><div class="node"><svg class="ic"><use href="#tag" /></svg><span>Symbols</span></div></li>
                          <li><div class="node"><svg class="ic"><use href="#section" /></svg><span class="selected">Section1</span></div></li>
                          <li class="end"><div class="node"><svg class="ic"><use href="#section" /></svg><span>END</span></div></li>
                        </ul>
                      </li>
                    </ul>
                  </li>
                  <li class="end"><div class="node"><svg class="ic"><path class="g" d="M4.5 1.5h8v13h-8z" /><path d="M1 3.5h3M1 6.5h3M1 9.5h3M1 12.5h3M13 3.5h3M13 6.5h3M13 9.5h3M13 12.5h3" /></svg><span>Function Blocks</span></div></li>
                </ul>
              </li>
            </ul>
          </li>
        </ul>
        <div class="sidetabs">
          <button><svg class="smooth"><path class="w" d="M0 .5l5 16h44l5-16" /></svg><span>Project</span></button>
        </div>
      </aside>

      <section class="center">
        <div class="editor">
          <div class="view">
            <div class="rung">
              <div class="gutter">0</div>
              <div class="ladder">
                <div class="comments">
                  <p>[Program Name : NewProgram1]</p>
                  <p>[Section Name : Section1]</p>
                </div>
                <div class="cells">
                  <div class="cursor"></div>
                  <div class="busbar"></div>
                </div>
              </div>
            </div>
          </div>
          <div class="vscroll">
            <span class="raised split"></span>
            <button class="raised" aria-label="Scroll up"><svg><path class="k" d="M3 9h8L7 5z" /></svg></button>
            <span class="raised thumb"></span>
            <span class="track"></span>
            <button class="raised" aria-label="Scroll down"><svg><path class="k" d="M3 5h8L7 9z" /></svg></button>
          </div>
          <div class="hscroll">
            <span class="raised split"></span>
            <button class="raised" aria-label="Scroll left"><svg><path class="k" d="M9 3v8L5 7z" /></svg></button>
            <span class="raised thumb"></span>
            <span class="track"></span>
            <button class="raised" aria-label="Scroll right"><svg><path class="k" d="M6 3v8l4-4z" /></svg></button>
          </div>
          <span class="corner"></span>
        </div>
        <div class="infobar">
          <button class="raised" aria-label="Close bar"><svg class="smooth"><path d="M2 2l5 5M7 2l-5 5" stroke-width="2" /></svg></button>
          <button class="raised" aria-label="Collapse bar"><svg><path class="k" d="M6 1v7L3 5z" /></svg></button>
          <output class="w-id"></output>
          <label for="opName">Name:</label>
          <output id="opName" class="w-name"></output>
          <label for="opValue">Address or Value:</label>
          <output id="opValue" class="w-value"></output>
          <label for="opComment">Comment:</label>
          <output id="opComment" class="w-comment"></output>
        </div>
      </section>
    </main>

    <footer class="statusbar">
      <span class="help">For Help, press F1</span>
      <span class="pane p-s"></span>
      <span class="pane p-m"></span>
      <span class="pane p-plc">PLC(Net:0,Node:0) - Offline</span>
      <span class="pane p-n"></span>
      <span class="pane p-n"></span>
      <span class="pane p-rung">rung 0 (0, 0)&nbsp; - 100%</span>
      <span class="pane p-l"></span>
      <span class="pane p-smart">Smart</span>
      <span class="pane p-e"></span>
      <svg class="sizer smooth"><path d="M2 15L15 2M7 15l8-8M12 15l3-3" /></svg>
    </footer>

    <form class="dialog change" action="#">
      <header>
        <h2>Change PLC Network Settings</h2>
        <button type="button" class="cap close" aria-label="Close"><svg class="smooth"><path class="xo" d="M12 4l7 7M19 4l-7 7" /><path class="xi" d="M12 4l7 7M19 4l-7 7" /></svg></button>
      </header>
      <div class="dlgbody">
        <fieldset>
          <legend>Network Type</legend>
          <div class="line">
            <div class="combo">
              <select aria-label="Network Type">
                <option>Ethernet(FINS/TCP)</option>
              </select>
              <span class="raised"><svg><path class="k" d="M3 6h8L7 10z" /></svg></span>
            </div>
            <button type="button" class="btn default focused">Settings...</button>
          </div>
        </fieldset>
        <div class="actions">
          <button type="button" class="btn">OK</button>
          <button type="button" class="btn">Cancel</button>
        </div>
      </div>
    </form>

    <form class="dialog network" action="#">
      <header>
        <h2>Network Settings [Ethernet(FINS/TCP)]</h2>
        <button type="button" class="cap close" aria-label="Close"><svg class="smooth"><path class="xo" d="M12 4l7 7M19 4l-7 7" /><path class="xi" d="M12 4l7 7M19 4l-7 7" /></svg></button>
      </header>
      <div class="dlgbody">
        <div class="tabs">
          <button type="button">Network</button>
          <button type="button" class="active">Driver</button>
        </div>
        <div class="tabpanel">
          <fieldset class="wide">
            <legend>Workstation Node Number</legend>
            <div class="line">
              <input type="checkbox" id="auto" checked>
              <label for="auto"><u>A</u>uto-negotiation</label>
              <span class="spin">
                <input type="text" aria-label="Node number" value="0" disabled>
                <span class="arrows">
                  <button type="button" class="raised" aria-label="Up" disabled><svg><path class="k" d="M5 5h4L7 3z" /></svg></button>
                  <button type="button" class="raised" aria-label="Down" disabled><svg><path class="k" d="M5 3h4L7 5z" /></svg></button>
                </span>
              </span>
            </div>
          </fieldset>
          <div class="pair">
            <fieldset class="ipset">
              <legend>IP Address</legend>
              <div class="ip">
                <input type="text" aria-label="Octet 1" value="10"><span>.</span>
                <input type="text" aria-label="Octet 2" value="255"><span>.</span>
                <input type="text" aria-label="Octet 3" value="254"><span>.</span>
                <input type="text" aria-label="Octet 4" value="10">
              </div>
            </fieldset>
            <fieldset class="portset">
              <legend>Port Number</legend>
              <input type="text" class="port" aria-label="Port Number" value="9600">
            </fieldset>
          </div>
        </div>
        <div class="actions">
          <button type="button" class="btn default">OK</button>
          <button type="button" class="btn">Annulla</button>
          <button type="button" class="btn">?</button>
        </div>
      </div>
    </form>
  </div>
</body>

</html>
```
FILE: styles.css
```css
* {
  box-sizing: border-box;
}

body {
  display: flex;
  height: 100vh;
  margin: 0;
  padding: 0 4px 2px 0;
  background-color: white;
  color: black;
  font-family: "Open Sans", "Noto Sans", sans-serif;
  font-size: 12px;
}

button, input, select {
  margin: 0;
  padding: 0;
  border: 0;
  border-radius: 0;
  background: none;
  color: inherit;
  font: inherit;
}

svg {
  display: block;
  width: 17px;
  height: 17px;
  fill: none;
  stroke: currentColor;
  shape-rendering: crispEdges;
}

.smooth {
  shape-rendering: auto;
}

.defs {
  position: absolute;
  width: 0;
  height: 0;
}

/* icon colours */
.k { fill: currentColor; stroke: none; }
.w { fill: white; }
.y { fill: #ffff40; }
.o { fill: #808000; }
.g { fill: #c0c0c0; }
.c { fill: #40c8f0; }
.c2 { fill: #20e8e8; }
.b { stroke: #000090; }
.h { fill: #b8b8b8; stroke-dasharray: 1 1; }

svg text {
  fill: currentColor;
  stroke: none;
  font: bold 8px "Liberation Sans", Arial, sans-serif;
}

svg .tiny { font-size: 7px; }
svg .gt { fill: #888; }
svg .nt { fill: #000090; font-size: 10px; }
svg .num { font-size: 11px; }

.window {
  position: relative;
  display: flex;
  flex-direction: column;
  flex: 1;
  min-width: 0;
  padding: 0 7px 6px 7px;
  border: 1px solid #101418;
  border-top: 2px solid #2c2c30;
  border-radius: 6px 6px 0 0;
  background-color: #b9d1ea;
  box-shadow: inset -1px -1px 0 #48c8d8, inset 1px 0 0 #e4eef8;
}

/* title bar */
.titlebar {
  display: flex;
  align-items: center;
  gap: 3px;
  height: 28px;
  margin: 0 -6px;
  padding: 0 9px 0 8px;
  border-radius: 4px 4px 0 0;
  background: linear-gradient(#9ab4d2, #b9d1ea);
}

h1, h2 {
  margin: 0;
  font-size: 12px;
  font-weight: normal;
  white-space: nowrap;
}

.titlebar h1 {
  flex: 1;
}

.titlebar .cap {
  margin-top: 4px;
}

.cap {
  width: 30px;
  height: 17px;
  border: 1px solid #5a6b82;
  border-radius: 2px;
  background: linear-gradient(#c8d8ea 45%, #a4bad4 50%, #b8cce4);
  box-shadow: inset 0 0 0 1px #dce8f4;
  color: #4a5568;
}

.cap svg {
  width: 100%;
  height: 100%;
  margin-left: 4px;
}

.cap.close {
  border-color: #5c1a1a;
  background: linear-gradient(#e0a090 45%, #c04030 50%, #d06850);
  box-shadow: inset 0 0 0 1px #e8b8a8;
}

.xo { stroke: #5a4a58; stroke-width: 4; }
.xi { stroke: white; stroke-width: 2; }

/* menu bar */
.menubar {
  display: flex;
  align-items: center;
  height: 21px;
  padding-left: 6px;
  border-bottom: 1px solid #a0a0a0;
  background: linear-gradient(#ffffff, #eef1fa 35%, #d8def0 45%, #dfe4f4);
}

.menubar > button {
  padding: 0 6px 0 7px;
}

.mdi {
  display: flex;
  gap: 2px;
  margin-left: auto;
  margin-right: 1px;
}

.mdi button {
  width: 18px;
  height: 18px;
  border: 1px solid #90a8c0;
  background-color: #dcecfa;
  color: #506070;
}

/* toolbars */
.toolrow {
  display: flex;
  height: 30px;
  background-color: #f0f0f0;
}

.band {
  position: relative;
  display: flex;
  align-items: center;
  padding: 0 6px 0 11px;
  border-top: 1px solid white;
  border-right: 1px solid #a0a0a0;
  border-bottom: 1px solid #a0a0a0;
}

.band::before {
  content: "";
  position: absolute;
  top: 1px;
  bottom: 1px;
  left: 3px;
  width: 7px;
  background: linear-gradient(90deg, #fff 1px, transparent 1px 2px, #a0a0a0 2px 3px, transparent 3px 4px, #fff 4px 5px, transparent 5px 6px, #a0a0a0 6px);
}

.band.gap {
  margin-left: 57px;
}

.toolrow.last {
  border-bottom: 1px solid #a0a0a0;
}

.toolrow.last .band {
  border-bottom: 0;
}

.band button {
  width: 23px;
  height: 22px;
  padding: 0 3px;
}

.band button:disabled {
  color: #a0a0a0;
}

.band button:disabled svg {
  filter: drop-shadow(1px 1px 0 white);
}

.band button:disabled .w {
  fill: #f0f0f0;
}

.band button.on {
  border: 1px solid #a0a0a0;
  border-right-color: white;
  border-bottom-color: white;
  padding: 0 2px;
  background-color: #f8f8f8;
}

.band i {
  width: 2px;
  height: 22px;
  margin: 0 3px;
  border-left: 1px solid #a0a0a0;
  border-right: 1px solid white;
}

/* workspace */
.workspace {
  display: flex;
  flex: 1;
  min-height: 0;
  background-color: #f0f0f0;
}

.raised {
  border: 1px solid;
  border-color: #fff #696969 #696969 #fff;
  background-color: #f0f0f0;
  box-shadow: inset -1px -1px 0 #a0a0a0;
}

.raised:disabled {
  color: #a0a0a0;
}

.side {
  display: flex;
  flex-direction: column;
  width: 235px;
  padding: 2px 11px 3px 4px;
  border-bottom: 1px solid #a0a0a0;
}

.grip {
  display: flex;
  gap: 2px;
  height: 12px;
  margin-bottom: 2px;
}

.grip span {
  flex: 1;
  height: 7px;
  margin-top: 3px;
  border: 1px solid #a0a0a0;
  border-width: 1px 0;
  box-shadow: 0 1px 0 white, inset 0 1px 0 white;
}

.grip button {
  width: 12px;
  height: 12px;
}

.grip svg {
  width: 10px;
  height: 10px;
}

.tree, .tree ul {
  margin: 0;
  padding: 0;
  list-style: none;
}

.tree {
  flex: 1;
  border: 2px solid;
  border-color: #808080 #f0f0f0 transparent #808080;
  border-bottom: 0;
  background-color: white;
}

.tree ul {
  margin-left: 19px;
}

.tree li {
  position: relative;
}

.tree ul > li::before {
  content: "";
  position: absolute;
  top: 0;
  bottom: 0;
  left: 8px;
  border-left: 1px dotted #808080;
}

.tree ul > li.end::before {
  bottom: auto;
  height: 10px;
}

.node {
  position: relative;
  display: flex;
  align-items: center;
  height: 18px;
  padding-left: 18px;
}

.node::before {
  content: "";
  position: absolute;
  top: 10px;
  left: 9px;
  width: 9px;
  border-top: 1px dotted #808080;
}

.node span {
  margin-left: 2px;
  padding: 0 2px;
  line-height: 18px;
  white-space: nowrap;
}

.node .selected {
  background-color: #f0f0f0;
}

.toggle {
  position: absolute;
  top: 6px;
  left: 4px;
  width: 9px;
  height: 9px;
  border: 1px solid #808080;
  background: linear-gradient(#000, #000) center / 5px 1px no-repeat white;
}

.sidetabs {
  height: 18px;
  padding-left: 1px;
  border-top: 1px solid black;
}

.sidetabs button {
  position: relative;
  top: -1px;
  width: 54px;
  height: 18px;
  font-size: 11px;
}

.sidetabs svg {
  position: absolute;
  top: 0;
  left: 0;
  width: 55px;
}

.sidetabs span {
  position: relative;
}

.center {
  display: flex;
  flex-direction: column;
  flex: 1;
  min-width: 0;
}

.editor {
  display: grid;
  grid-template-columns: 1fr 17px;
  grid-template-rows: 1fr 17px;
  flex: 1;
  min-height: 0;
  margin-right: 2px;
  border: 1px solid;
  border-color: #606060 #808080 #606060 #606060;
  border-top-width: 2px;
  border-left-width: 2px;
}

.view {
  min-width: 0;
  overflow: hidden;
  background-color: white;
}

.rung {
  display: flex;
  font: 11px "Liberation Sans", Arial, sans-serif;
}

.gutter {
  width: 47px;
  padding: 0 3px;
  border-right: 1px solid #a0a0a0;
  border-bottom: 1px solid #a0a0a0;
  background-color: #f0f0f0;
}

.ladder {
  flex: 1;
  min-width: 0;
  margin-left: 3px;
  padding-top: 6px;
  background: linear-gradient(#208020, #208020) 0 0 / 1px 65px no-repeat;
}

.comments {
  height: 56px;
  padding-left: 4px;
  border-left: 9px solid #208020;
  background-color: yellow;
}

.comments p {
  margin: 0;
  height: 28px;
  line-height: 15px;
}

/* one mark at each corner where ladder cells meet */
.cells {
  position: relative;
  height: 56px;
  border-bottom: 1px solid #e0e0e0;
  background: radial-gradient(circle, #c8c8c8 1px, transparent 2px) 43px 31px / 85px 49px;
}

.cursor {
  position: absolute;
  top: 3px;
  left: -2px;
  width: 90px;
  height: 55px;
  border: 3px solid transparent;
  background:
    linear-gradient(#a9d4fe, #a9d4fe) padding-box,
    repeating-linear-gradient(135deg, #000 0 1px, #fff 1px 3px) border-box;
}

.busbar {
  position: absolute;
  top: 6px;
  left: 595px;
  width: 1px;
  height: 50px;
  background-color: #208020;
}

.vscroll, .hscroll {
  display: flex;
  background: repeating-conic-gradient(#fff 0 25%, #f0f0f0 0 50%) 0 0 / 2px 2px;
}

.vscroll {
  flex-direction: column;
}

.vscroll .split { height: 6px; }
.vscroll button { height: 16px; }
.vscroll .thumb { flex: 345; }
.vscroll .track { flex: 139; }

.vscroll svg, .hscroll svg {
  width: 14px;
  height: 14px;
}

.hscroll .split { width: 5px; }
.hscroll button { width: 19px; }
.hscroll .thumb { flex: 928; }
.hscroll .track { flex: 78; }

.corner {
  background-color: #f0f0f0;
}

.infobar {
  display: flex;
  align-items: center;
  gap: 3px;
  height: 22px;
  padding-top: 2px;
}

.infobar button {
  width: 12px;
  height: 12px;
  margin-bottom: 4px;
  background-color: #d0d0d0;
}

.infobar svg {
  width: 10px;
  height: 10px;
}

.infobar output, .pane {
  border: 1px solid;
  border-color: #a0a0a0 white white #a0a0a0;
}

.infobar output {
  height: 17px;
}

.infobar label {
  white-space: nowrap;
}

.w-id { width: 63px; }
.w-name { width: 250px; }
.w-value { width: 71px; }
.w-comment { flex: 1; }

.statusbar {
  display: flex;
  align-items: center;
  gap: 3px;
  height: 19px;
  padding-left: 2px;
  background-color: #f0f0f0;
  font-family: "Noto Sans", "Open Sans", sans-serif;
  font-size: 11px;
  white-space: nowrap;
}

.help {
  flex: 1;
}

.pane {
  height: 17px;
  padding-left: 1px;
  line-height: 15px;
}

.p-s { width: 19px; }
.p-m { width: 65px; }
.p-plc { width: 255px; }
.p-n { width: 55px; }
.p-rung { width: 130px; }
.p-l { width: 105px; }
.p-smart { width: 60px; }
.p-e { width: 28px; }

.sizer {
  color: #a0a0a0;
}

/* dialogs */
.dialog {
  position: absolute;
  border: 1px solid black;
  border-radius: 5px 5px 0 0;
  background-color: #f0f0f0;
  box-shadow: inset 0 0 0 1px #70c8e0;
  font: 11px "Liberation Sans", Arial, sans-serif;
}

.change {
  top: 406px;
  left: 296px;
  width: 323px;
}

.network {
  top: 303px;
  left: 686px;
  width: 415px;
}

.dialog header {
  display: flex;
  align-items: center;
  justify-content: space-between;
  height: 24px;
  padding: 0 4px 0 6px;
  border-radius: 4px 4px 0 0;
  background: linear-gradient(#9ab4d2, #b9d1ea);
  font-family: "Open Sans", "Noto Sans", sans-serif;
}

.dialog .cap {
  width: 32px;
}

.dialog .cap svg {
  margin-left: 0;
}

fieldset {
  min-width: 0;
  margin: 0;
  padding: 7px 5px 0 13px;
  border: 1px solid #a0a0a0;
}

legend {
  margin-left: -7px;
  padding: 0 2px;
  line-height: 14px;
}

.line {
  display: flex;
  align-items: center;
}

.btn {
  width: 75px;
  height: 24px;
  border: 1px solid;
  border-color: white #696969 #696969 white;
  background-color: #f0f0f0;
  box-shadow: inset -1px -1px 0 #a0a0a0;
}

.btn.default {
  border-color: #696969;
  box-shadow: inset 1px 1px 0 white, inset -1px -1px 0 #696969, inset -2px -2px 0 #a0a0a0;
}

.btn.focused {
  height: 21px;
  outline: 1px dotted black;
  outline-offset: -5px;
}

.change .dlgbody {
  padding: 7px 11px 8px 5px;
}

.change fieldset {
  padding-bottom: 28px;
}

.change .line {
  justify-content: space-between;
}

.change .actions {
  display: flex;
  gap: 52px;
  padding: 9px 0 0 50px;
}

.combo {
  position: relative;
  width: 197px;
}

.combo select, .ip, .port, .spin {
  border: 2px solid;
  border-color: #808080 #f0f0f0 #f0f0f0 #808080;
}

.combo select {
  width: 100%;
  height: 21px;
  padding-left: 2px;
  background-color: white;
  appearance: none;
}

.combo span {
  position: absolute;
  top: 2px;
  right: 2px;
  width: 17px;
  height: 17px;
  pointer-events: none;
}

.network .dlgbody {
  padding: 7px 8px 9px;
}

.tabs {
  display: flex;
  align-items: flex-end;
  padding-left: 2px;
}

.tabs button {
  width: 51px;
  height: 18px;
  border: 1px solid white;
  border-width: 1px 0 0 1px;
}

.tabs .active {
  position: relative;
  width: 45px;
  height: 21px;
  margin-bottom: -1px;
  padding-bottom: 2px;
  border-right: 2px solid #808080;
  background-color: #f0f0f0;
}

.tabpanel {
  height: 274px;
  padding: 6px 12px;
  border: 1px solid;
  border-color: white #696969 #696969 white;
  box-shadow: inset -1px -1px 0 #a0a0a0;
}

.wide {
  width: 280px;
  height: 58px;
  padding-top: 12px;
}

#auto {
  width: 13px;
  height: 13px;
  margin-right: 5px;
  border: 2px solid;
  border-color: #808080 #f0f0f0 #f0f0f0 #808080;
  background-color: white;
  appearance: none;
}

#auto:checked::before {
  content: "";
  display: block;
  width: 7px;
  height: 4px;
  margin: 1px;
  border: solid black;
  border-width: 0 0 2px 2px;
  transform: rotate(-45deg);
}

.spin {
  display: flex;
  width: 41px;
  height: 20px;
  margin-left: 16px;
}

.spin input {
  flex: 1;
  min-width: 0;
  padding-left: 1px;
  color: #909090;
}

.arrows {
  display: flex;
  flex-direction: column;
}

.arrows button {
  width: 16px;
  height: 8px;
}

.arrows svg {
  width: 14px;
  height: 6px;
}

.pair {
  display: flex;
  gap: 18px;
  margin-top: 7px;
}

.ipset {
  width: 179px;
  height: 58px;
  padding-top: 10px;
  padding-right: 8px;
}

.portset {
  width: 83px;
  height: 58px;
  padding: 12px 0 0 11px;
}

.ip {
  display: flex;
  align-items: center;
  height: 23px;
  padding-left: 8px;
  background-color: white;
  font-size: 13px;
}

.ip input {
  flex: 1;
  min-width: 0;
  text-align: center;
}

.port {
  width: 44px;
  height: 20px;
  background-color: white;
}

.network .actions {
  display: flex;
  justify-content: flex-end;
  gap: 6px;
  padding-top: 5px;
}
```
